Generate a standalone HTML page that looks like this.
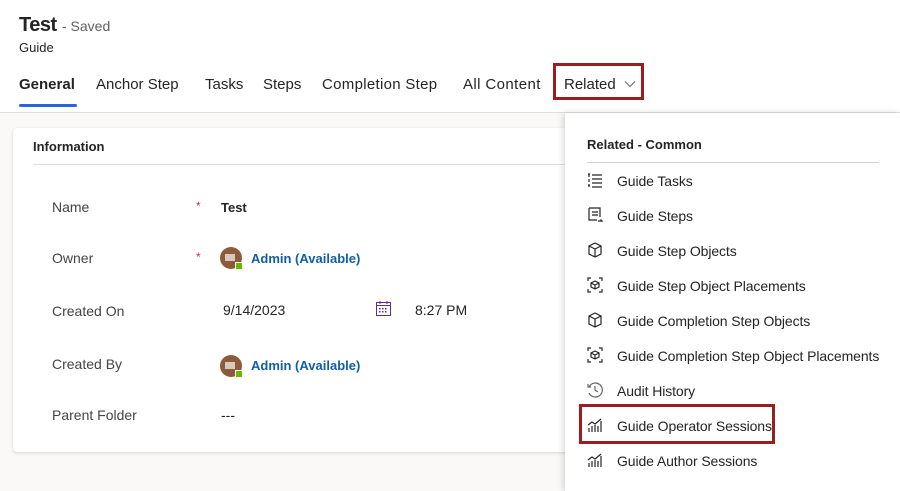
<!DOCTYPE html>
<html><head><style>
*{margin:0;padding:0;box-sizing:border-box}
body{width:900px;height:491px;overflow:hidden;font-family:"Liberation Sans",sans-serif;background:#faf9f8;position:relative;color:#323130}
.hdr{position:absolute;left:0;top:0;width:900px;height:113px;background:#fff;border-bottom:1px solid #e1dfdd}
.abs{position:absolute;white-space:nowrap}
.tab{position:absolute;top:76px;font-size:15px;color:#242424}
.card{position:absolute;left:13px;top:128px;width:560px;height:324px;background:#fff;border-radius:4px;box-shadow:0 1px 3px rgba(0,0,0,.15)}
.lbl{position:absolute;left:52px;font-size:14px;color:#444}
.val{position:absolute;font-size:14px;color:#242424}
.av{position:absolute;left:220px;width:22px;height:22px;border-radius:50%;background:#8d5a3a}
.av:after{content:"";position:absolute;left:5px;top:7px;width:10px;height:7px;background:#d9c8bd}
.av i{position:absolute;right:-1px;bottom:-1px;width:8px;height:8px;background:#6bb700;border:1px solid #fff}
.lnk{position:absolute;left:251px;font-size:13px;font-weight:bold;color:#115ea3}
.panel{position:absolute;left:565px;top:113px;width:335px;height:378px;background:#fff;box-shadow:-2px 0 6px rgba(0,0,0,.15)}
.it{position:absolute;left:52px;font-size:14px;color:#242424;letter-spacing:-0.1px}
.ic{position:absolute;left:21px;width:18px;height:18px}
</style></head><body>
<div class="hdr">
<div class="abs" style="left:19px;top:14px;font-size:20px;font-weight:bold;color:#242424;letter-spacing:-0.5px">Test</div>
<div class="abs" style="left:62px;top:18px;font-size:14px;color:#616161">- Saved</div>
<div class="abs" style="left:19px;top:40px;font-size:13px;color:#242424">Guide</div>
<div class="tab" style="left:19px;font-weight:bold">General</div>
<div class="abs" style="left:19px;top:104px;width:58px;height:3px;background:#2266e3;border-radius:2px"></div>
<div class="tab" style="left:96px">Anchor Step</div>
<div class="tab" style="left:205px">Tasks</div>
<div class="tab" style="left:263px">Steps</div>
<div class="tab" style="left:322px;letter-spacing:0.3px">Completion Step</div>
<div class="tab" style="left:463px;letter-spacing:0.4px">All Content</div>
<div class="abs" style="left:553px;top:63px;width:91px;height:37px;border:3px solid #9b1c21"></div>
<div class="tab" style="left:564px">Related</div>
<svg class="abs" style="left:624px;top:80px" width="12" height="8" viewBox="0 0 12 8"><path d="M1 1.5 6 6.5 11 1.5" fill="none" stroke="#666" stroke-width="1"/></svg>
</div>
<div class="card">
<div class="abs" style="left:20px;top:11px;font-size:13px;font-weight:bold;color:#242424">Information</div>
<div class="abs" style="left:20px;top:36px;width:540px;height:1px;background:#e1dfdd"></div>
</div>
<div class="lbl" style="top:199px">Name</div>
<div class="abs" style="left:196px;top:199px;color:#c4314b;font-size:12px">*</div>
<div class="val" style="left:221px;top:200px;font-weight:bold;font-size:13px">Test</div>
<div class="lbl" style="top:250px">Owner</div>
<div class="abs" style="left:196px;top:250px;color:#c4314b;font-size:12px">*</div>
<div class="av" style="top:247px"><i></i></div>
<div class="lnk" style="top:251px">Admin (Available)</div>
<div class="lbl" style="top:303px">Created On</div>
<div class="val" style="left:223px;top:302px">9/14/2023</div>
<svg class="abs" style="left:375px;top:300px" width="17" height="17" viewBox="0 0 17 17"><rect x="1.5" y="2.5" width="14" height="13" fill="none" stroke="#5c2e91" stroke-width="1"/><path d="M1.5 5.5h14M5 1v3M12 1v3" stroke="#5c2e91"/><g fill="#5c2e91"><rect x="4" y="8" width="1.5" height="1.5"/><rect x="7" y="8" width="1.5" height="1.5"/><rect x="10" y="8" width="1.5" height="1.5"/><rect x="4" y="11" width="1.5" height="1.5"/><rect x="7" y="11" width="1.5" height="1.5"/><rect x="10" y="11" width="1.5" height="1.5"/></g></svg>
<div class="val" style="left:415px;top:302px">8:27 PM</div>
<div class="lbl" style="top:356px">Created By</div>
<div class="av" style="top:355px"><i></i></div>
<div class="lnk" style="top:358px">Admin (Available)</div>
<div class="lbl" style="top:407px">Parent Folder</div>
<div class="val" style="left:221px;top:407px">---</div>

<div class="panel">
<div class="abs" style="left:22px;top:24px;font-size:13px;font-weight:bold;color:#242424">Related - Common</div>
<div class="abs" style="left:22px;top:49px;width:292px;height:1px;background:#d1d1d1"></div>
<svg class="ic" style="top:58px" viewBox="0 0 18 18" fill="none" stroke="#242424" stroke-width="1.2"><path d="M3 3v3M3 8v3M3 13v2M6 4h10M6 8h10M6 12h10M6 16h10M2 3h2M2 15h2"/></svg>
<div class="it" style="top:60px">Guide Tasks</div>
<svg class="ic" style="top:93px" viewBox="0 0 18 18" fill="none" stroke="#242424" stroke-width="1.2"><path d="M3 2h11v9M3 2v12h8M6 6h6M6 9h6M12 15h4l-1.5-1.5"/></svg>
<div class="it" style="top:95px">Guide Steps</div>
<svg class="ic" style="top:128px" viewBox="0 0 18 18" fill="none" stroke="#242424" stroke-width="1.2"><path d="M9 2l6 3v8l-6 3-6-3V5zM3 5l6 3 6-3M9 8v8"/></svg>
<div class="it" style="top:130px">Guide Step Objects</div>
<svg class="ic" style="top:163px" viewBox="0 0 18 18" fill="none" stroke="#242424" stroke-width="1.2"><path d="M2 5V2h3M13 2h3v3M2 13v3h3M13 16h3v-3M9 5l4 2v4l-4 2-4-2V7zM5 7l4 2 4-2M9 9v4"/></svg>
<div class="it" style="top:165px">Guide Step Object Placements</div>
<svg class="ic" style="top:198px" viewBox="0 0 18 18" fill="none" stroke="#242424" stroke-width="1.2"><path d="M9 2l6 3v8l-6 3-6-3V5zM3 5l6 3 6-3M9 8v8"/></svg>
<div class="it" style="top:200px">Guide Completion Step Objects</div>
<svg class="ic" style="top:233px" viewBox="0 0 18 18" fill="none" stroke="#242424" stroke-width="1.2"><path d="M2 5V2h3M13 2h3v3M2 13v3h3M13 16h3v-3M9 5l4 2v4l-4 2-4-2V7zM5 7l4 2 4-2M9 9v4"/></svg>
<div class="it" style="top:235px">Guide Completion Step Object Placements</div>
<svg class="ic" style="top:268px" viewBox="0 0 18 18" fill="none" stroke="#666" stroke-width="1.2"><path d="M3 6A7 7 0 1 1 3 12M2 3v3h3M9 5v4l3 2"/></svg>
<div class="it" style="top:270px">Audit History</div>
<div class="abs" style="left:14px;top:291px;width:196px;height:40px;border:3px solid #9b1c21"></div>
<svg class="ic" style="top:303px" viewBox="0 0 18 18" fill="none" stroke="#242424" stroke-width="1.2"><path d="M3 16v-4M6 16v-6M9 16V9M12 16v-6M15 16V5M2 9l4-3 3 2 6-5"/></svg>
<div class="it" style="top:305px">Guide Operator Sessions</div>
<svg class="ic" style="top:338px" viewBox="0 0 18 18" fill="none" stroke="#242424" stroke-width="1.2"><path d="M3 16v-4M6 16v-6M9 16V9M12 16v-6M15 16V5M2 9l4-3 3 2 6-5"/></svg>
<div class="it" style="top:340px">Guide Author Sessions</div>
</div>
</body></html>
